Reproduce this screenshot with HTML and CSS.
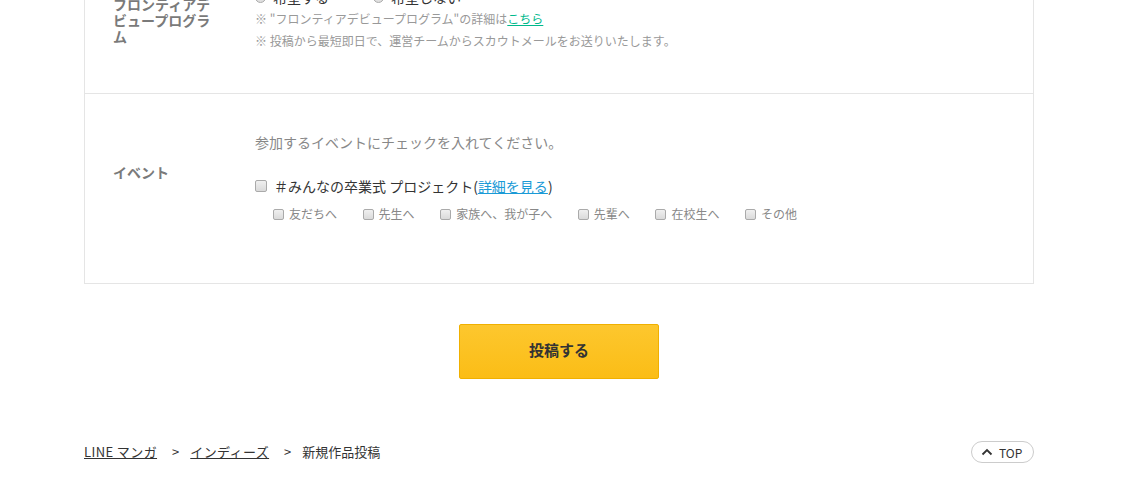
FILE: index.html
```html
<!DOCTYPE html>
<html lang="ja">
<head>
<meta charset="utf-8">
<title>新規作品投稿</title>
<link rel="stylesheet" href="styles.css">
</head>
<body>
<div class="page">
  <div class="form-box">
    <div class="row row-frontier">
      <div class="row-label">フロンティアデビュープログラム</div>
      <div class="row-body">
        <div class="radios">
          <label class="radio-item"><span class="radio"></span>希望する</label>
          <label class="radio-item"><span class="radio"></span>希望しない<span class="req">*</span></label>
        </div>
        <p class="note">※ "フロンティアデビュープログラム"の詳細は<a class="link-green" href="#">こちら</a></p>
        <p class="note">※ 投稿から最短即日で、運営チームからスカウトメールをお送りいたします。</p>
      </div>
    </div>
    <div class="row row-event">
      <div class="row-label label-event">イベント</div>
      <div class="row-body">
        <p class="intro">参加するイベントにチェックを入れてください。</p>
        <label class="main-check"><span class="check"></span>＃みんなの卒業式 プロジェクト(<a class="link-blue" href="#">詳細を見る</a>)</label>
        <div class="sub-checks">
          <label class="sub-item"><span class="check check-sm"></span>友だちへ</label>
          <label class="sub-item"><span class="check check-sm"></span>先生へ</label>
          <label class="sub-item"><span class="check check-sm"></span>家族へ、我が子へ</label>
          <label class="sub-item"><span class="check check-sm"></span>先輩へ</label>
          <label class="sub-item"><span class="check check-sm"></span>在校生へ</label>
          <label class="sub-item"><span class="check check-sm"></span>その他</label>
        </div>
      </div>
    </div>
  </div>

  <div class="submit-wrap">
    <button class="submit" type="button">投稿する</button>
  </div>

  <div class="footer">
    <nav class="crumbs">
      <a href="#">LINE マンガ</a>
      <span class="sep">&gt;</span>
      <a href="#">インディーズ</a>
      <span class="sep">&gt;</span>
      <span class="current">新規作品投稿</span>
    </nav>
    <a class="top-btn" href="#">
      <svg width="12" height="8" viewBox="0 0 12 8"><path d="M1.5 6.5 L6 2 L10.5 6.5" fill="none" stroke="#333" stroke-width="1.8"/></svg>
      TOP
    </a>
  </div>
</div>
</body>
</html>
```

FILE: styles.css
```css
* { box-sizing: border-box; }
html, body { margin: 0; padding: 0; background: #fff; overflow: hidden; }
body {
  font-family: "Noto Sans CJK JP", "Noto Sans", "Liberation Sans", sans-serif;
  color: #333;
}
.page {
  width: 1118px;
  margin-top: -54px;
}
.form-box {
  width: 950px;
  margin: 0 auto;
  border: 1px solid #e5e5e5;
}
.row {
  display: flex;
  align-items: flex-start;
  padding: 40px 28px 40px 28px;
}
.row + .row { border-top: 1px solid #e5e5e5; }
.row-frontier { padding-bottom: 41px; }
.row-event { padding-top: 39px; padding-bottom: 60px; }
.row-label {
  width: 110px;
  margin-right: 32px;
  flex: none;
  font-size: 14px;
  line-height: 16px;
  font-weight: bold;
  color: #7a7a7a;
}
.row-frontier .row-label { align-self: center; }
.label-event { margin-top: 31px; }
.row-body { flex: 1; }
.radios {
  display: flex;
  gap: 44px;
  height: 20px;
  align-items: center;
}
.radio-item {
  display: flex;
  align-items: center;
  font-size: 14px;
  line-height: 20px;
  color: #333;
}
.radio {
  width: 11px;
  height: 11px;
  border-radius: 50%;
  border: 1px solid #aaa;
  background: linear-gradient(#f4f4f4, #dcdcdc);
  margin-right: 7px;
}
.req { color: #f39800; font-size: 12px; margin-left: 1px; }
.note {
  margin: 0;
  font-size: 12px;
  line-height: 22px;
  color: #999;
}
.radios + .note { margin-top: 1px; }
.link-green { color: #00b98c; text-decoration: underline; }
.intro {
  margin: 0;
  font-size: 14px;
  line-height: 18px;
  color: #888;
}
.main-check {
  display: flex;
  align-items: center;
  margin-top: 25px;
  font-size: 14px;
  line-height: 20px;
  color: #333;
}
.link-blue { color: #1a9ad6; text-decoration: underline; }
.check {
  width: 12px;
  height: 12px;
  border: 1px solid #aaa;
  border-radius: 2px;
  background: linear-gradient(#f0f0f0, #dadada);
  margin-right: 7px;
  flex: none;
}
.check-sm {
  width: 11px;
  height: 11px;
  margin-right: 5px;
}
.sub-checks {
  display: flex;
  gap: 25.6px;
  margin-top: 9px;
  padding-left: 18px;
}
.sub-item {
  display: flex;
  align-items: center;
  font-size: 12px;
  line-height: 18px;
  color: #888;
}
.submit-wrap {
  display: flex;
  justify-content: center;
  margin-top: 40px;
}
.submit {
  width: 200px;
  height: 55px;
  border: 1px solid #f0b000;
  border-radius: 2px;
  background: linear-gradient(#fdc72e, #fbbd16);
  font-family: inherit;
  font-size: 15px;
  font-weight: bold;
  color: #333;
  padding: 0 0 4px;
}
.footer {
  width: 950px;
  margin: 62px auto 0;
  display: flex;
  justify-content: space-between;
  align-items: center;
  height: 22px;
}
.crumbs {
  display: flex;
  align-items: center;
  font-size: 13px;
  line-height: 18px;
  color: #333;
}
.crumbs a { color: #333; text-decoration: underline; letter-spacing: 0.4px; }
.sep { margin: 0 11px 0 15px; }
.top-btn {
  display: flex;
  align-items: center;
  gap: 6px;
  height: 22px;
  width: 63px;
  padding-left: 9px;
  border: 1px solid #ccc;
  border-radius: 11px;
  font-size: 12px;
  color: #333;
  text-decoration: none;
}
```
